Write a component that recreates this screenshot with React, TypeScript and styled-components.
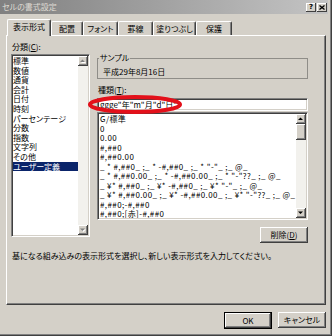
import React from "react";
import styled, { createGlobalStyle } from "styled-components";

const FONT = `"Noto Sans CJK JP", "Noto Sans CJK SC", "Noto Sans", sans-serif`;

const GlobalStyle = createGlobalStyle`
  html, body { margin: 0; padding: 0; background: #d4d0c8; }
  body { font-family: ${FONT}; font-size: 8px; color: #000; }
  * { box-sizing: border-box; }
`;

const Window = styled.div`
  position: relative;
  width: 332px;
  height: 336px;
  background: #d4d0c8;
  border-right: 1px solid #404040;
  border-bottom: 1px solid #404040;
  display: flex;
  font-family: ${FONT};
  font-size: 8px;
  font-feature-settings: "palt";
  overflow: hidden;
`;

const Frame = styled.div`
  flex: 1;
  display: flex;
  flex-direction: column;
  border-right: 1px solid #808080;
  border-bottom: 1px solid #808080;
  padding-right: 2px;
`;

const TitleBar = styled.div`
  height: 14px;
  flex: none;
  display: flex;
  align-items: center;
  justify-content: space-between;
  padding: 0 1px 0 2px;
  background: linear-gradient(to right, #808080, #c4c4c4);
`;

const TitleText = styled.span`
  color: #dedad2;
  font-size: 8px;
  line-height: 14px;
`;

const CaptionButtons = styled.div`
  display: flex;
  gap: 1px;
  align-items: center;
`;

const CaptionButton = styled.div`
  width: 10px;
  height: 9px;
  background: #d4d0c8;
  box-shadow: inset -1px -1px #404040, inset 1px 1px #fff;
  display: flex;
  align-items: center;
  justify-content: center;
  font: bold 7px/1 "DejaVu Sans", sans-serif;
  color: #000;
`;

const Content = styled.div`
  padding: 5px 0 0 6px;
  display: flex;
  flex-direction: column;
`;

const TabStrip = styled.div`
  display: flex;
  align-items: flex-end;
  height: 16px;
  padding-left: 1px;
  position: relative;
  z-index: 1;
`;

const Tab = styled.div<{ $w: number; $active?: boolean }>`
  width: ${(p) => p.$w}px;
  height: ${(p) => (p.$active ? 17 : 14)}px;
  margin-bottom: ${(p) => (p.$active ? -1 : 0)}px;
  background: #d4d0c8;
  border-top: 1px solid #fff;
  border-left: 1px solid #fff;
  border-right: 1px solid #404040;
  border-radius: 2px 2px 0 0;
  box-shadow: inset -1px 0 #808080;
  display: flex;
  align-items: center;
  justify-content: center;
  line-height: 10px;
  padding-bottom: ${(p) => (p.$active ? 2 : 0)}px;
  position: relative;
  z-index: ${(p) => (p.$active ? 2 : 1)};
`;

const Panel = styled.div`
  width: 320px;
  height: 270px;
  border: 1px solid;
  border-color: #fff #404040 #404040 #fff;
  box-shadow: inset -1px -1px #808080;
  padding: 6px 0 0 4px;
  display: flex;
  flex-direction: column;
`;

const PanelGrid = styled.div`
  display: grid;
  grid-template-columns: 79px 211px;
  column-gap: 7px;
  align-items: start;
`;

const Column = styled.div`
  display: flex;
  flex-direction: column;
`;

const Label = styled.div<{ $mt?: number }>`
  line-height: 10px;
  height: 10px;
  padding-left: 1px;
  margin-top: ${(p) => p.$mt ?? 0}px;
  white-space: nowrap;
`;

const Key = styled.span`
  text-decoration: underline;
  text-underline-offset: 1px;
`;

const Sunken = styled.div<{ $h: number; $mt?: number }>`
  height: ${(p) => p.$h}px;
  margin-top: ${(p) => p.$mt ?? 0}px;
  background: #fff;
  border: 1px solid;
  border-color: #808080 #fff #fff #808080;
  padding: 1px;
  box-shadow: inset 1px 1px #404040, inset -1px -1px #d4d0c8;
  display: flex;
  overflow: hidden;
`;

const Items = styled.div`
  flex: 1;
  min-width: 0;
  overflow: hidden;
  display: flex;
  flex-direction: column;
`;

const CategoryItem = styled.div<{ $selected?: boolean }>`
  flex: none;
  height: 9.6px;
  line-height: 9.6px;
  white-space: nowrap;
  background: ${(p) => (p.$selected ? "#0a246a" : "transparent")};
  color: ${(p) => (p.$selected ? "#fff" : "#000")};
`;

const FormatItem = styled.div`
  flex: none;
  height: 9.5px;
  line-height: 9.5px;
  padding-left: 1px;
  white-space: pre;
  letter-spacing: 0.4px;
`;

const ScrollBar = styled.div`
  width: 10px;
  flex: none;
  display: flex;
  flex-direction: column;
  justify-content: space-between;
  background: #f2f1ed;
`;

const ScrollButton = styled.div`
  height: 10px;
  flex: none;
  background: #d4d0c8;
  box-shadow: inset -1px -1px #404040, inset 1px 1px #fff, inset -2px -2px #808080;
  display: flex;
  align-items: center;
  justify-content: center;
`;

const Thumb = styled(ScrollButton)`
  height: 16px;
`;

const ScrollTop = styled.div`
  display: flex;
  flex-direction: column;
`;

const Fieldset = styled.fieldset`
  margin: 11px 0 0 0;
  padding: 4px 4px 1px 5px;
  border: 1px solid #8f8d88;
  min-width: 0;
`;

const Legend = styled.legend`
  padding: 0 1px;
  margin-left: -4px;
  line-height: 10px;
`;

const SampleText = styled.div`
  line-height: 10px;
  height: 10px;
`;

const InputText = styled.div`
  flex: 1;
  line-height: 9px;
  padding-left: 1px;
  white-space: pre;
`;

const RightAligned = styled.div<{ $mt: number }>`
  display: flex;
  justify-content: flex-end;
  margin-top: ${(p) => p.$mt}px;
`;

const Button = styled.div<{ $w: number; $default?: boolean }>`
  width: ${(p) => p.$w}px;
  height: ${(p) => (p.$default ? 17 : 16)}px;
  background: #d4d0c8;
  border: ${(p) => (p.$default ? "1px solid #000" : "0")};
  box-shadow: inset -1px -1px #404040, inset 1px 1px #fff, inset -2px -2px #808080;
  display: flex;
  align-items: center;
  justify-content: center;
  line-height: 10px;
`;

const Instruction = styled.div`
  margin-top: 8px;
  line-height: 10px;
  padding-left: 1px;
  white-space: nowrap;
`;

const ButtonRow = styled.div`
  display: flex;
  justify-content: flex-end;
  gap: 6px;
  width: 320px;
  margin-top: 7px;
`;

const Highlight = styled.svg`
  position: absolute;
  left: 85px;
  top: 92px;
  pointer-events: none;
`;

const ArrowIcon = ({ dir, disabled }: { dir: "up" | "down"; disabled?: boolean }) => {
  const pts = dir === "up" ? "0,3 5,3 2.5,0.5" : "0,0.5 5,0.5 2.5,3";
  return (
    <svg width="6" height="4" viewBox="0 0 6 4">
      {disabled && <polygon points={pts} fill="#fff" transform="translate(1,1)" />}
      <polygon points={pts} fill={disabled ? "#808080" : "#000"} />
    </svg>
  );
};

const categories = [
  "標準",
  "数値",
  "通貨",
  "会計",
  "日付",
  "時刻",
  "パーセンテージ",
  "分数",
  "指数",
  "文字列",
  "その他",
  "ユーザー定義",
];

const formats = [
  "G/標準",
  "0",
  "0.00",
  "#,##0",
  "#,##0.00",
  '_ * #,##0_ ;_ * -#,##0_ ;_ * "-"_ ;_ @_',
  '_ * #,##0.00_ ;_ * -#,##0.00_ ;_ * "-"??_ ;_ @_',
  '_ ¥* #,##0_ ;_ ¥* -#,##0_ ;_ ¥* "-"_ ;_ @_',
  '_ ¥* #,##0.00_ ;_ ¥* -#,##0.00_ ;_ ¥* "-"??_ ;_ @_',
  "#,##0;-#,##0",
  "#,##0;[赤]-#,##0",
];

const tabs: { label: string; w: number }[] = [
  { label: "表示形式", w: 44 },
  { label: "配置", w: 32 },
  { label: "フォント", w: 35 },
  { label: "罫線", w: 35 },
  { label: "塗りつぶし", w: 43 },
  { label: "保護", w: 36 },
];

export default function App() {
  return (
    <>
      <GlobalStyle />
      <Window>
        <Frame>
          <TitleBar>
            <TitleText>セルの書式設定</TitleText>
            <CaptionButtons>
              <CaptionButton>?</CaptionButton>
              <CaptionButton>
                <svg width="6" height="5" viewBox="0 0 6 5">
                  <path d="M0.5 0.5 L5.5 4.5 M5.5 0.5 L0.5 4.5" stroke="#000" strokeWidth="1.3" />
                </svg>
              </CaptionButton>
            </CaptionButtons>
          </TitleBar>
          <Content>
            <TabStrip>
              {tabs.map((t, i) => (
                <Tab key={t.label} $w={t.w} $active={i === 0}>
                  {t.label}
                </Tab>
              ))}
            </TabStrip>
            <Panel>
              <PanelGrid>
                <Column>
                  <Label>
                    分類(<Key>C</Key>):
                  </Label>
                  <Sunken $h={183} $mt={2}>
                    <Items>
                      {categories.map((c, i) => (
                        <CategoryItem key={c} $selected={i === categories.length - 1}>
                          {c}
                        </CategoryItem>
                      ))}
                    </Items>
                    <ScrollBar>
                      <ScrollButton>
                        <ArrowIcon dir="up" disabled />
                      </ScrollButton>
                      <ScrollButton>
                        <ArrowIcon dir="down" disabled />
                      </ScrollButton>
                    </ScrollBar>
                  </Sunken>
                </Column>
                <Column>
                  <Fieldset>
                    <Legend>サンプル</Legend>
                    <SampleText>平成29年8月16日</SampleText>
                  </Fieldset>
                  <Label $mt={6}>
                    種類(<Key>T</Key>):
                  </Label>
                  <Sunken $h={13} $mt={3}>
                    <InputText>ggge"年"m"月"d"日"</InputText>
                  </Sunken>
                  <Sunken $h={108} $mt={1}>
                    <Items>
                      {formats.map((f) => (
                        <FormatItem key={f}>{f}</FormatItem>
                      ))}
                    </Items>
                    <ScrollBar>
                      <ScrollTop>
                        <ScrollButton>
                          <ArrowIcon dir="up" />
                        </ScrollButton>
                        <Thumb />
                      </ScrollTop>
                      <ScrollButton>
                        <ArrowIcon dir="down" />
                      </ScrollButton>
                    </ScrollBar>
                  </Sunken>
                  <RightAligned $mt={7}>
                    <Button $w={48}>
                      削除(<Key>D</Key>)
                    </Button>
                  </RightAligned>
                </Column>
              </PanelGrid>
              <Instruction>基になる組み込みの表示形式を選択し、新しい表示形式を入力してください。</Instruction>
            </Panel>
            <ButtonRow>
              <Button $w={48} $default>
                OK
              </Button>
              <Button $w={48}>キャンセル</Button>
            </ButtonRow>
          </Content>
        </Frame>
        <Highlight width="100" height="26" viewBox="0 0 100 26">
          <ellipse cx="50" cy="12.5" rx="45" ry="7.5" fill="none" stroke="#e3101a" strokeWidth="4" />
        </Highlight>
      </Window>
    </>
  );
}
